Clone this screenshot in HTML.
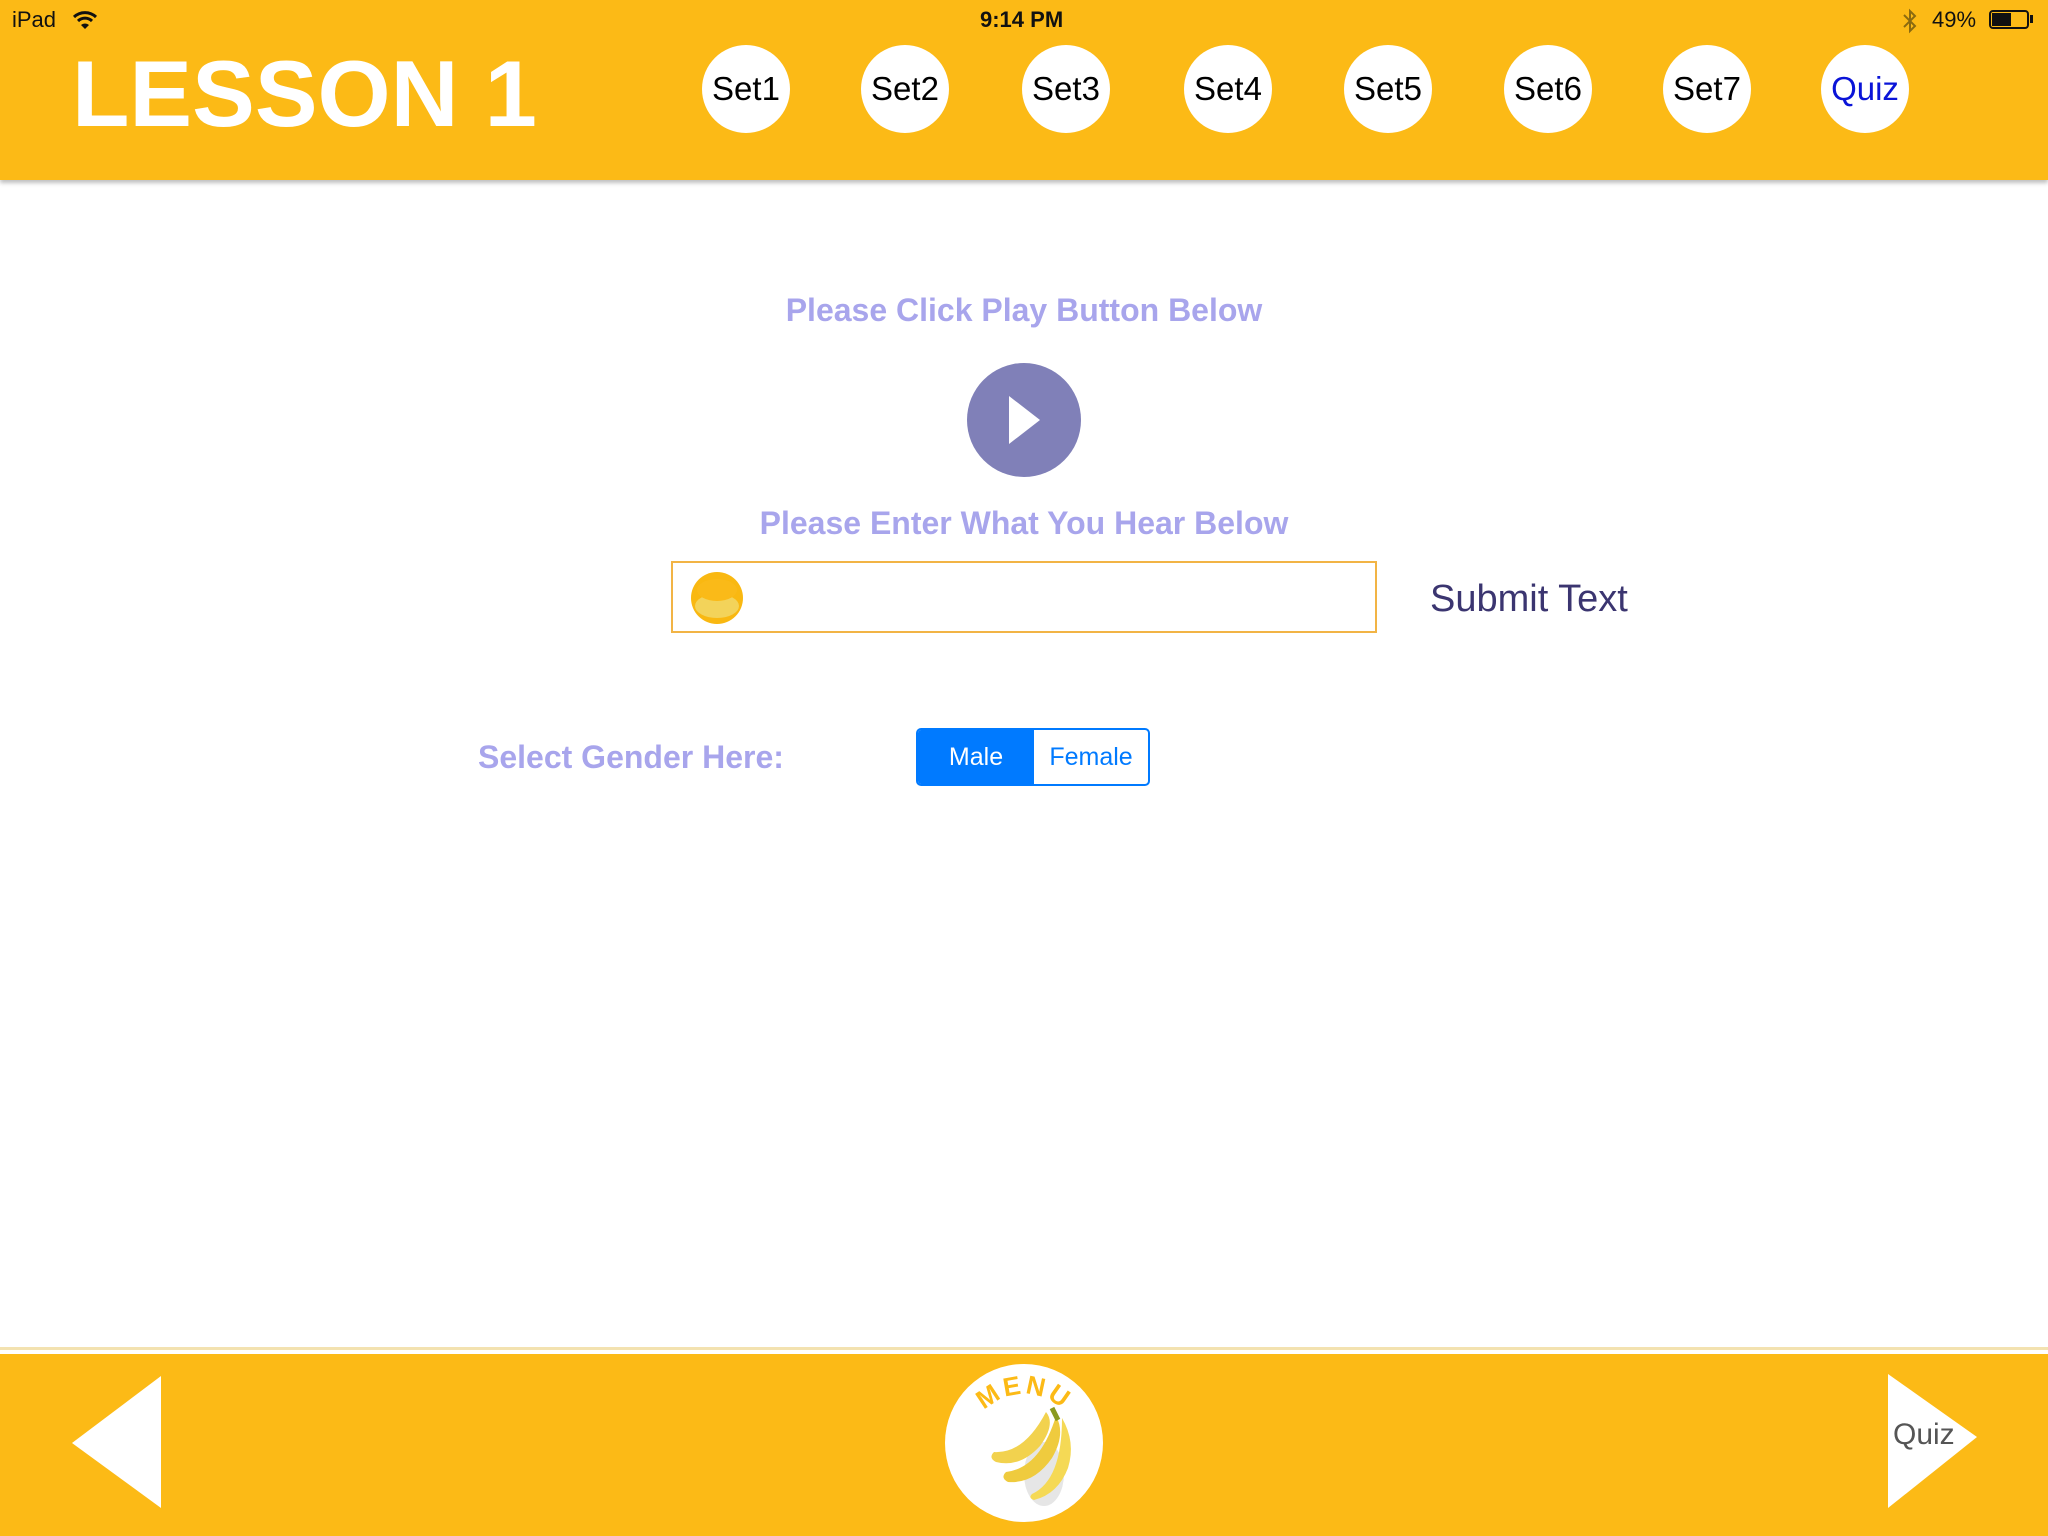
<!DOCTYPE html>
<html><head><meta charset="utf-8">
<style>
*{margin:0;padding:0;box-sizing:border-box}
html,body{width:2048px;height:1536px;overflow:hidden;background:#fff;font-family:"Liberation Sans",sans-serif}
.abs{position:absolute}
#hdr{left:0;top:0;width:2048px;height:180px;background:#FCBA16;box-shadow:0 3px 4px rgba(0,0,0,0.25)}
.sb{font-size:22px;color:#111;top:7px}
.lesson{left:72px;top:40px;font-size:94px;font-weight:bold;color:#fff}
.c{width:88px;height:88px;border-radius:50%;background:#fff;top:45px;display:flex;align-items:center;justify-content:center;font-size:33px;color:#000}
.ins{font-size:32px;font-weight:bold;color:#A8A5EC;width:2048px;text-align:center;left:0}
#foot{left:0;top:1354px;width:2048px;height:182px;background:#FCBA16}
</style></head><body>
<div id="hdr" class="abs"></div>
<div class="abs sb" style="left:12px">iPad</div>
<svg class="abs" style="left:72px;top:10px" width="26" height="20" viewBox="0 0 26 20"><path d="M2 7 A16 16 0 0 1 24 7" stroke="#111" stroke-width="3" fill="none"/><path d="M6 11 A10 10 0 0 1 20 11" stroke="#111" stroke-width="3" fill="none"/><path d="M9 15 L13 19 L17 15 A6 6 0 0 0 9 15Z" fill="#111"/></svg>
<div class="abs sb" style="left:980px;font-weight:bold">9:14 PM</div>
<svg class="abs" style="left:1902px;top:8px" width="16" height="26" viewBox="0 0 16 26"><path d="M2 7 L13 18 L8 23 L8 3 L13 8 L2 19" stroke="#8a6a10" stroke-width="2" fill="none"/></svg>
<div class="abs sb" style="left:1932px">49%</div>
<div class="abs" style="left:1989px;top:10px;width:40px;height:19px;border:2px solid #111;border-radius:4px"><div style="width:19px;height:13px;background:#111;margin:1px"></div></div>
<div class="abs" style="left:2030px;top:15px;width:3px;height:8px;background:#111"></div>
<div class="abs lesson">LESSON 1</div>
<div class="abs c" style="left:702px">Set1</div>
<div class="abs c" style="left:861px">Set2</div>
<div class="abs c" style="left:1022px">Set3</div>
<div class="abs c" style="left:1184px">Set4</div>
<div class="abs c" style="left:1344px">Set5</div>
<div class="abs c" style="left:1504px">Set6</div>
<div class="abs c" style="left:1663px">Set7</div>
<div class="abs c" style="left:1821px;color:#0A14D8">Quiz</div>

<div class="abs ins" style="top:292px">Please Click Play Button Below</div>
<svg class="abs" style="left:965px;top:361px" width="118" height="118"><circle cx="59" cy="59" r="57" fill="#8080B8"/><path d="M44 35 L44 83 L75 59Z" fill="#fff"/></svg>
<div class="abs ins" style="top:505px">Please Enter What You Hear Below</div>
<div class="abs" style="left:671px;top:561px;width:706px;height:72px;border:2px solid #F2B445"></div>
<svg class="abs" style="left:686px;top:568px" width="64" height="60"><ellipse cx="31" cy="30" rx="26" ry="26" fill="#F9B811"/><ellipse cx="31" cy="38" rx="22" ry="12" fill="#F3D35A"/><ellipse cx="31" cy="22" rx="20" ry="11" fill="#FABA18"/></svg>
<div class="abs" style="left:1430px;top:578px;font-size:38px;color:#3B3570">Submit Text</div>
<div class="abs" style="left:478px;top:739px;font-size:32px;font-weight:bold;color:#A8A5EC">Select Gender Here:</div>
<div class="abs" style="left:916px;top:728px;width:234px;height:58px;border:2px solid #007AFF;border-radius:5px;display:flex;overflow:hidden;font-size:25px">
<div style="width:116px;background:#007AFF;color:#fff;display:flex;align-items:center;justify-content:center">Male</div>
<div style="flex:1;color:#007AFF;display:flex;align-items:center;justify-content:center">Female</div></div>

<div class="abs" style="left:0;top:1347px;width:2048px;height:3px;background:#F3E2B0"></div>
<div id="foot" class="abs"></div>
<svg class="abs" style="left:70px;top:1376px" width="94" height="134"><path d="M91 0 L91 132 L2 67Z" fill="#fff"/></svg>
<svg class="abs" style="left:1886px;top:1374px" width="94" height="136"><path d="M2 0 L2 134 L91 63Z" fill="#fff"/></svg>
<div class="abs" style="left:1893px;top:1418px;font-size:30px;color:#555">Quiz</div>
<svg class="abs" style="left:944px;top:1364px" width="160" height="160" viewBox="0 0 160 160">
<circle cx="80" cy="79" r="79" fill="#fff"/>
<defs><path id="arc" d="M30 62 A55 55 0 0 1 130 62"/></defs>
<text font-family="Liberation Sans" font-weight="bold" font-size="26" fill="#FCBA16" letter-spacing="3"><textPath href="#arc" startOffset="50%" text-anchor="middle">MENU</textPath></text>
<ellipse cx="100" cy="110" rx="20" ry="32" fill="#e6e6e6"/>
<path d="M50 88 Q80 90 102 48 Q112 60 96 82 Q76 104 52 98 Q44 94 50 88Z" fill="#F2D24E"/>
<path d="M62 108 Q96 104 112 52 Q122 70 108 94 Q90 120 64 118 Q56 114 62 108Z" fill="#EFCB3E"/>
<path d="M88 130 Q118 116 118 54 Q132 78 124 104 Q114 130 90 136 Q84 134 88 130Z" fill="#F5D955"/>
<path d="M108 44 L114 56" stroke="#8a9a20" stroke-width="5"/>
</svg>
</body></html>
